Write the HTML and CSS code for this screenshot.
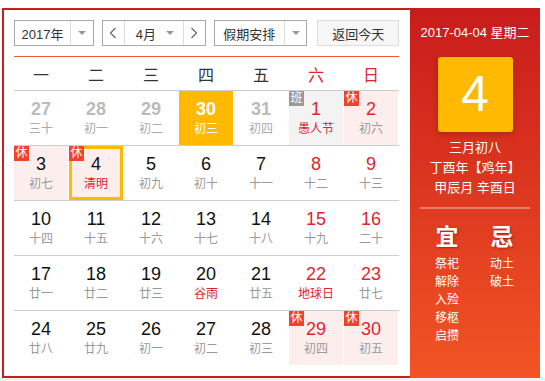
FILE: index.html
```html
<!DOCTYPE html>
<html lang="zh-CN">
<head>
    <meta charset="UTF-8">
    <title>万年历</title>
    <link rel="stylesheet" href="styles.css">
</head>
<body>

    <div class="calendar">
        <div class="cal-main">
            <!-- 顶部工具栏 -->
            <div class="toolbar">
                <div class="select year-select">
                    <span class="select-text">2017年</span>
                    <span class="select-arrow"><i class="caret"></i></span>
                </div>
                <div class="select month-select">
                    <span class="nav-btn">
                        <svg width="8" height="12" viewBox="0 0 8 12"><polyline points="6.5,1 1.5,6 6.5,11" fill="none" stroke="#666" stroke-width="1.2"/></svg>
                    </span>
                    <span class="month-text">4月<i class="caret"></i></span>
                    <span class="nav-btn">
                        <svg width="8" height="12" viewBox="0 0 8 12"><polyline points="1.5,1 6.5,6 1.5,11" fill="none" stroke="#666" stroke-width="1.2"/></svg>
                    </span>
                </div>
                <div class="select holiday-select">
                    <span class="select-text">假期安排</span>
                    <span class="select-arrow"><i class="caret"></i></span>
                </div>
                <button class="today-btn">返回今天</button>
            </div>

            <!-- 星期 -->
            <div class="week-head">
                <span>一</span><span>二</span><span>三</span><span>四</span><span>五</span>
                <span class="weekend">六</span><span class="weekend">日</span>
            </div>

            <!-- 日期 -->
            <div class="days">
                <div class="row">
                    <div class="day other"><b>27</b><small>三十</small></div>
                    <div class="day other"><b>28</b><small>初一</small></div>
                    <div class="day other"><b>29</b><small>初二</small></div>
                    <div class="day selected"><b>30</b><small>初三</small></div>
                    <div class="day other"><b>31</b><small>初四</small></div>
                    <div class="day work weekend"><em class="tag tag-work">班</em><b>1</b><small class="fest">愚人节</small></div>
                    <div class="day rest weekend"><em class="tag">休</em><b>2</b><small>初六</small></div>
                </div>
                <div class="row">
                    <div class="day rest"><em class="tag">休</em><b>3</b><small>初七</small></div>
                    <div class="day rest today"><em class="tag">休</em><b>4</b><small class="fest">清明</small></div>
                    <div class="day"><b>5</b><small>初九</small></div>
                    <div class="day"><b>6</b><small>初十</small></div>
                    <div class="day"><b>7</b><small>十一</small></div>
                    <div class="day weekend"><b>8</b><small>十二</small></div>
                    <div class="day weekend"><b>9</b><small>十三</small></div>
                </div>
                <div class="row">
                    <div class="day"><b>10</b><small>十四</small></div>
                    <div class="day"><b>11</b><small>十五</small></div>
                    <div class="day"><b>12</b><small>十六</small></div>
                    <div class="day"><b>13</b><small>十七</small></div>
                    <div class="day"><b>14</b><small>十八</small></div>
                    <div class="day weekend"><b>15</b><small>十九</small></div>
                    <div class="day weekend"><b>16</b><small>二十</small></div>
                </div>
                <div class="row">
                    <div class="day"><b>17</b><small>廿一</small></div>
                    <div class="day"><b>18</b><small>廿二</small></div>
                    <div class="day"><b>19</b><small>廿三</small></div>
                    <div class="day"><b>20</b><small class="fest">谷雨</small></div>
                    <div class="day"><b>21</b><small>廿五</small></div>
                    <div class="day weekend"><b>22</b><small class="fest">地球日</small></div>
                    <div class="day weekend"><b>23</b><small>廿七</small></div>
                </div>
                <div class="row">
                    <div class="day"><b>24</b><small>廿八</small></div>
                    <div class="day"><b>25</b><small>廿九</small></div>
                    <div class="day"><b>26</b><small>初一</small></div>
                    <div class="day"><b>27</b><small>初二</small></div>
                    <div class="day"><b>28</b><small>初三</small></div>
                    <div class="day rest weekend"><em class="tag">休</em><b>29</b><small>初四</small></div>
                    <div class="day rest weekend"><em class="tag">休</em><b>30</b><small>初五</small></div>
                </div>
            </div>
        </div>

        <!-- 右侧详情 -->
        <div class="cal-side">
            <div class="side-date">2017-04-04 星期二</div>
            <div class="side-day">4</div>
            <div class="side-lunar">
                <p>三月初八</p>
                <p>丁酉年【鸡年】</p>
                <p>甲辰月 辛酉日</p>
            </div>
            <div class="side-line"></div>
            <div class="almanac">
                <div class="almanac-col">
                    <h2>宜</h2>
                    <p>祭祀</p><p>解除</p><p>入殓</p><p>移柩</p><p>启攒</p>
                </div>
                <div class="almanac-col">
                    <h2>忌</h2>
                    <p>动土</p><p>破土</p>
                </div>
            </div>
        </div>
    </div>
    <div class="page-foot"></div>

</body>
</html>
```

FILE: styles.css
```css
body {
    margin: 0;
    background-color: #fff;
    font-family: "Liberation Sans", Arial, "Noto Sans CJK SC", sans-serif;
    color: #333;
}

.calendar {
    display: flex;
    margin: 8px 5px 0 2px;
    height: 370px;
}

.cal-main {
    width: 385px;
    padding: 10px 11px 0 10px;
    border: 2px solid #c81e1e;
    border-right: none;
}

/* 工具栏 */
.toolbar {
    display: flex;
    height: 26px;
    margin-bottom: 10px;
    font-size: 13px;
}

.select {
    display: flex;
    box-sizing: border-box;
    height: 26px;
    border: 1px solid #a9a9a9;
    color: #333;
}

.select-text {
    display: flex;
    align-items: center;
    justify-content: center;
    border-right: 1px solid #ddd;
}

.select-arrow {
    display: flex;
    align-items: center;
    justify-content: center;
    flex: 1;
}

.caret {
    display: inline-block;
    width: 0;
    height: 0;
    border-left: 4px solid transparent;
    border-right: 4px solid transparent;
    border-top: 4px solid #999;
}

.year-select {
    width: 80px;
}

.year-select .select-text {
    width: 55px;
}

.month-select {
    width: 104px;
    margin-left: 8px;
}

.nav-btn {
    display: flex;
    align-items: center;
    justify-content: center;
    width: 21px;
}

.month-text {
    display: flex;
    align-items: center;
    justify-content: space-between;
    width: 60px;
    padding: 0 9px 0 11px;
    box-sizing: border-box;
    border-left: 1px solid #ddd;
    border-right: 1px solid #ddd;
}

.holiday-select {
    width: 94px;
    margin-left: 8px;
}

.holiday-select .select-text {
    width: 69px;
}

.today-btn {
    width: 82px;
    height: 26px;
    margin-left: 10px;
    padding: 0;
    background-color: #f6f6f6;
    border: 1px solid #dcdcdc;
    color: #333;
    font-family: inherit;
    font-size: 13px;
}

/* 星期 */
.week-head {
    display: grid;
    grid-template-columns: repeat(7, 54px);
    column-gap: 1px;
    height: 33px;
    align-items: center;
    border-top: 1px solid #f2553c;
    border-bottom: 1px solid #ccc;
    font-size: 16px;
    text-align: center;
    color: #333;
}

.week-head .weekend {
    color: #e0262d;
}

/* 日期 */
.row {
    display: grid;
    grid-template-columns: repeat(7, 54px);
    column-gap: 1px;
    border-bottom: 1px solid #ccc;
}

.row:last-child {
    border-bottom: none;
}

.day {
    position: relative;
    height: 54px;
    padding-top: 8px;
    box-sizing: border-box;
    text-align: center;
}

.day b {
    display: block;
    height: 20px;
    line-height: 20px;
    font-size: 18px;
    font-weight: normal;
    color: #111;
}

.day small {
    display: block;
    height: 20px;
    line-height: 20px;
    font-size: 12px;
    color: #999;
}

.day.weekend b {
    color: #e0262d;
}

.day.other b {
    color: #bbb;
    font-weight: bold;
}

.day.other small {
    color: #aaa;
}

.day small.fest {
    color: #e0262d;
}

.day.rest {
    background-color: #fdeeee;
}

.day.work {
    background-color: #f3f3f3;
}

.day.selected {
    background-color: #ffb900;
}

.day.selected b {
    color: #fff;
    font-weight: bold;
}

.day.selected small {
    color: #fff;
}

.day.today {
    box-shadow: inset 0 0 0 3px #ffb900;
}

.tag {
    position: absolute;
    top: 0;
    left: 0;
    width: 15px;
    height: 15px;
    line-height: 15px;
    font-size: 12px;
    font-style: normal;
    color: #fff;
    background-color: #f4412f;
}

.tag-work {
    background-color: #999;
}

/* 右侧 */
.cal-side {
    width: 130px;
    padding-top: 17px;
    box-sizing: border-box;
    background: linear-gradient(to bottom, #c81c1c, #f25424);
    color: #fff;
    text-align: center;
}

.side-date {
    line-height: 16px;
    font-size: 13px;
}

.side-day {
    width: 75px;
    height: 75px;
    margin: 16px auto 0;
    line-height: 75px;
    font-size: 50px;
    background-color: #ffb900;
    border-radius: 3px;
    box-shadow: 0 2px 6px rgba(120, 0, 0, 0.35);
}

.side-lunar {
    margin-top: 6px;
    font-size: 13px;
}

.side-lunar p {
    margin: 0;
    line-height: 20px;
}

.side-line {
    height: 2px;
    margin: 9px 10px 0;
    background-color: rgba(255, 255, 255, 0.35);
}

.almanac {
    display: flex;
    justify-content: center;
    gap: 31px;
    margin-top: 13px;
    padding-right: 1px;
}

.almanac-col {
    width: 24px;
}

.almanac-col h2 {
    margin: 0 0 3px;
    line-height: 30px;
    font-size: 23px;
    font-weight: bold;
    text-shadow: 1px 1px 2px rgba(120, 0, 0, 0.5);
}

.almanac-col p {
    margin: 0;
    line-height: 18px;
    font-size: 12px;
}

.page-foot {
    height: 3px;
    margin-left: 2px;
    background-color: #f3f3f3;
}
```
